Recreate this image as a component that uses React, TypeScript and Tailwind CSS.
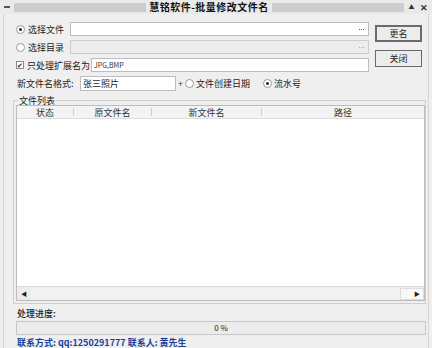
import { Fragment } from 'react';

const cols = [
  { label: '状态', w: 'w-[56px]' },
  { label: '原文件名', w: 'w-[77px]' },
  { label: '新文件名', w: 'w-[109px]' },
  { label: '路径', w: 'flex-1' },
];

function Radio({ checked }: { checked?: boolean }) {
  return (
    <span className="w-[9px] h-[9px] rounded-full border border-[#9a9a9a] bg-white flex items-center justify-center shrink-0">
      {checked && <span className="w-[3px] h-[3px] rounded-full bg-[#222]" />}
    </span>
  );
}

function Dots({ dim }: { dim?: boolean }) {
  const c = dim ? 'bg-[#b0b0b0]' : 'bg-[#666]';
  return (
    <span className="flex gap-[1px] items-center">
      <span className={`w-[1px] h-[1px] ${c}`} />
      <span className={`w-[1px] h-[1px] ${c}`} />
      <span className={`w-[1px] h-[1px] ${c}`} />
    </span>
  );
}

export default function App() {
  return (
    <div
      className="w-[432px] h-[348px] overflow-hidden bg-[#efefef] text-[9px] leading-none text-[#222] flex flex-col"
      style={{ fontFamily: '"Noto Sans CJK SC", "Noto Sans", sans-serif' }}
    >
      {/* title bar */}
      <div className="h-[14px] flex items-center bg-[#eaeaea] shrink-0">
        <span className="w-[14px] flex justify-center">
          <span className="w-[6px] h-[2px] bg-[#555]" />
        </span>
        <div className="flex-1 h-[9px] bg-[#cdcdcd]" />
        <span className="px-[3px] font-bold text-[10px] tracking-[0.5px] text-[#111]">慧铭软件-批量修改文件名</span>
        <div className="flex-1 h-[9px] bg-[#cdcdcd]" />
        <span className="w-[28px] flex items-center justify-center gap-[5px] text-[#333]">
          <span className="text-[6px]">▲</span>
          <span className="text-[9px] font-bold">✕</span>
        </span>
      </div>

      {/* window body */}
      <div className="flex-1 flex flex-col mx-[3px] border-l border-r border-[#d4d4d4] pl-[9px] pr-[2px]">
        {/* top controls */}
        <div className="flex mt-[8px]">
          <div className="w-[356px] flex flex-col gap-[4px]">
            <div className="h-[14px] flex items-center">
              <span className="ml-[3px]"><Radio checked /></span>
              <span className="ml-[3px] w-[42px]">选择文件</span>
              <div className="flex-1 h-[14px] bg-white border border-[#bdbdbd] flex items-center justify-end pr-[4px]">
                <Dots />
              </div>
            </div>
            <div className="h-[14px] flex items-center">
              <span className="ml-[3px]"><Radio /></span>
              <span className="ml-[3px] w-[42px]">选择目录</span>
              <div className="flex-1 h-[14px] bg-[#ececec] border border-[#cdcdcd] flex items-center justify-end pr-[4px]">
                <Dots dim />
              </div>
            </div>
            <div className="h-[14px] flex items-center">
              <span className="ml-[3px] w-[8px] h-[8px] border border-[#8a8a8a] bg-white flex items-center justify-center text-[7px] leading-none">✔</span>
              <span className="ml-[3px] w-[64px]">只处理扩展名为</span>
              <div className="flex-1 h-[14px] bg-white border border-[#bdbdbd] flex items-center pl-[2px] text-[7px] text-[#333]">JPG,BMP</div>
            </div>
            <div className="h-[15px] flex items-center">
              <span className="ml-[4px] w-[63px]">新文件名格式:</span>
              <div className="w-[96px] h-[15px] bg-white border border-[#bdbdbd] flex items-center pl-[2px]">张三照片</div>
              <span className="ml-[2px] mr-[2px] text-[#444]">+</span>
              <Radio />
              <span className="ml-[2px] w-[67px]">文件创建日期</span>
              <Radio checked />
              <span className="ml-[2px]">流水号</span>
            </div>
          </div>
          <div className="ml-[6px] flex flex-col gap-[8px] mt-[3px]">
            <div className="w-[47px] h-[17px] border-2 border-[#6b6b6b] bg-[#ececec] flex items-center justify-center">更名</div>
            <div className="w-[47px] h-[17px] border border-[#6b6b6b] bg-[#ececec] flex items-center justify-center">关闭</div>
          </div>
        </div>

        {/* group box */}
        <div className="mt-[9px] flex flex-col h-[204px] border-l border-r border-b border-[#cfcfcf]">
          <div className="h-[1px] flex items-center">
            <div className="w-[4px] h-[1px] bg-[#cfcfcf]" />
            <span className="px-[1px] bg-[#efefef]">文件列表</span>
            <div className="flex-1 h-[1px] bg-[#cfcfcf]" />
          </div>
          <div className="mt-[4px] ml-[2px] flex-1 flex flex-col border border-[#bcbcbc] bg-white mb-[2px]">
            <div className="h-[13px] flex bg-[#f3f3f3] border-b border-[#dedede]">
              {cols.map((c, i) => (
                <Fragment key={c.label}>
                  <div className={`${c.w} flex items-center justify-center text-[#333]`}>{c.label}</div>
                  {i < cols.length - 1 && <div className="w-[1px] my-[2px] bg-[#cfcfcf]" />}
                </Fragment>
              ))}
            </div>
            <div className="flex-1" />
            <div className="h-[14px] flex items-center bg-[#ececec] border-t border-[#dadada]">
              <span className="w-[14px] flex justify-center text-[6px] text-[#222]">◀</span>
              <div className="flex-1 h-[12px] bg-[#f2f2f2]" />
              <span className="w-[24px] h-[12px] bg-[#f8f8f8] border border-[#dcdcdc] flex items-center justify-end pr-[3px] text-[6px] text-[#222]">▶</span>
            </div>
          </div>
        </div>

        {/* progress */}
        <div className="mt-[5px] ml-[4px] font-medium">处理进度:</div>
        <div className="mt-[3px] ml-[3px] h-[14px] border border-[#c6c6c6] bg-[#ececec] flex items-center justify-center text-[8px]">0 %</div>

        <div className="mt-[3px] ml-[4px] font-bold text-[#1c3f9c] whitespace-nowrap">
          联系方式: qq:1250291777 联系人: 黄先生
        </div>
      </div>
    </div>
  );
}
